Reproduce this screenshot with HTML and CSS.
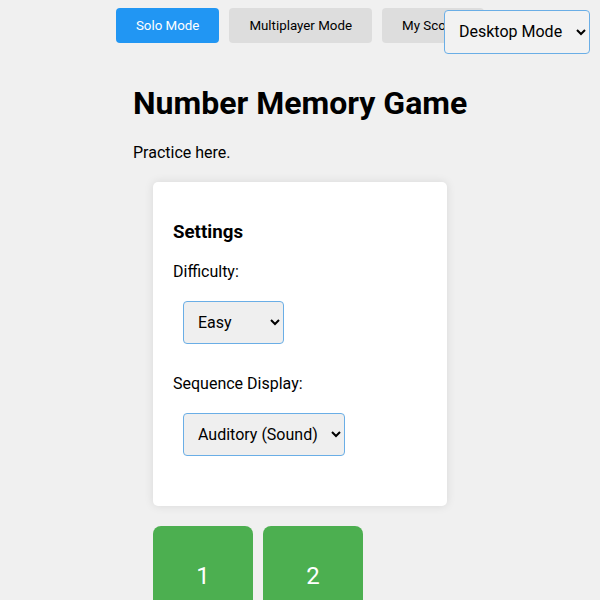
FILE: index.html
```html
<!DOCTYPE html>
<html lang="en">
<head>
<meta charset="utf-8">
<title>Number Memory Game</title>
<link rel="stylesheet" href="styles.css">
</head>
<body>
<select class="mode-select">
  <option>Desktop Mode</option>
  <option>Mobile Mode</option>
</select>
<nav class="nav">
  <button class="nav-btn active">Solo Mode</button>
  <button class="nav-btn">Multiplayer Mode</button>
  <button class="nav-btn">My Scores</button>
</nav>
<main class="container">
  <h1 class="title">Number Memory Game</h1>
  <p class="intro">Practice here.</p>
  <section class="card">
    <h3 class="card-title">Settings</h3>
    <div class="field">
      <label class="field-label">Difficulty:</label>
      <select class="field-select">
        <option>Easy</option>
        <option>Medium</option>
        <option>Hard</option>
      </select>
    </div>
    <div class="field">
      <label class="field-label">Sequence Display:</label>
      <select class="field-select">
        <option>Auditory (Sound)</option>
        <option>Visual</option>
      </select>
    </div>
  </section>
  <div class="pad">
    <button class="num">1</button>
    <button class="num">2</button>
    <button class="num">3</button>
    <button class="num">4</button>
    <button class="num">5</button>
    <button class="num">6</button>
  </div>
</main>
</body>
</html>
```
FILE: styles.css
```css
body {
  margin: 8px;
  background: #f0f0f0;
  font-family: Roboto, "Liberation Sans", sans-serif;
  color: #000;
}
.mode-select {
  position: fixed;
  top: 10px;
  right: 10px;
  font-family: Roboto, "Liberation Sans", sans-serif;
  font-size: 16px;
  padding: 10px 10px 11px;
  border: 1px solid #6aaee6;
  border-radius: 4px;
  background: #f2f2f2;
  color: #000;
}
.nav {
  display: flex;
  justify-content: center;
  gap: 10px;
  margin-bottom: 41px;
}
.nav-btn {
  font-family: Roboto, "Liberation Sans", sans-serif;
  font-size: 13.333px;
  padding: 10px 20px;
  border: none;
  border-radius: 4px;
  background: #dddddd;
  color: #000;
}
.nav-btn.active {
  background: #2196f3;
  color: #fff;
}
.container {
  max-width: 334px;
  margin: 0 auto;
}
.title {
  font-size: 32px;
  font-weight: 700;
  margin: 21.44px 0;
  white-space: nowrap;
}
.intro {
  font-size: 16px;
  margin: 16px 0;
}
.card {
  background: #fff;
  margin: 20px;
  padding: 20px;
  border-radius: 5px;
  box-shadow: 0 0 10px rgba(0, 0, 0, 0.1);
}
.card-title {
  font-size: 18.72px;
  font-weight: 700;
  margin: 18.72px 0;
}
.field {
  display: flex;
  flex-direction: column;
  align-items: flex-start;
  margin-bottom: 20px;
}
.field-label {
  font-size: 16px;
  margin-bottom: 10px;
}
.field-select {
  margin: 10px;
  font-family: Roboto, "Liberation Sans", sans-serif;
  font-size: 16px;
  padding: 10px;
  border: 1px solid #6aaee6;
  border-radius: 4px;
  background: #efefef;
  color: #000;
}
.pad {
  display: flex;
  flex-wrap: wrap;
  gap: 10px;
  margin: 20px;
}
.num {
  width: 100px;
  height: 100px;
  border: none;
  border-radius: 8px;
  background: #4caf50;
  color: #fff;
  font-family: Roboto, "Liberation Sans", sans-serif;
  font-size: 24px;
}
```
